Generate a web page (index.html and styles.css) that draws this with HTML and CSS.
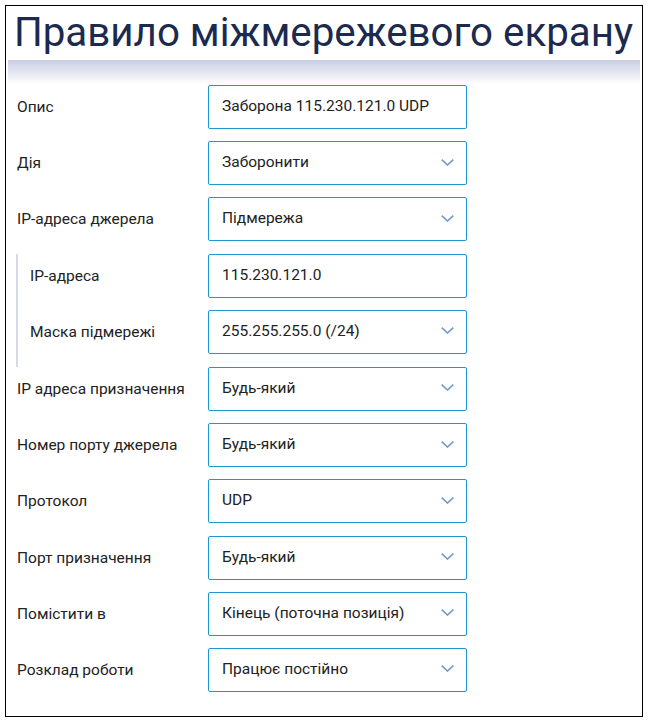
FILE: index.html
```html
<!DOCTYPE html>
<html lang="uk">
<head>
<meta charset="utf-8">
<link rel="stylesheet" href="styles.css">
</head>
<body>
<div class="panel">
  <h1 class="title">Правило міжмережевого екрану</h1>
  <div class="band"></div>
  <div class="form">
    <div class="row"><div class="label">Опис</div><div class="field">Заборона 115.230.121.0 UDP</div></div>
    <div class="row"><div class="label">Дія</div><div class="field select">Заборонити<svg class="chev" viewBox="0 0 13 7"><path d="M0.7 0.7 L6.5 6 L12.3 0.7"/></svg></div></div>
    <div class="row"><div class="label">IP-адреса джерела</div><div class="field select">Підмережа<svg class="chev" viewBox="0 0 13 7"><path d="M0.7 0.7 L6.5 6 L12.3 0.7"/></svg></div></div>
    <div class="group">
      <div class="row"><div class="label sub">IP-адреса</div><div class="field">115.230.121.0</div></div>
      <div class="row"><div class="label sub">Маска підмережі</div><div class="field select">255.255.255.0 (/24)<svg class="chev" viewBox="0 0 13 7"><path d="M0.7 0.7 L6.5 6 L12.3 0.7"/></svg></div></div>
    </div>
    <div class="row"><div class="label">IP адреса призначення</div><div class="field select">Будь-який<svg class="chev" viewBox="0 0 13 7"><path d="M0.7 0.7 L6.5 6 L12.3 0.7"/></svg></div></div>
    <div class="row"><div class="label">Номер порту джерела</div><div class="field select">Будь-який<svg class="chev" viewBox="0 0 13 7"><path d="M0.7 0.7 L6.5 6 L12.3 0.7"/></svg></div></div>
    <div class="row"><div class="label">Протокол</div><div class="field select">UDP<svg class="chev" viewBox="0 0 13 7"><path d="M0.7 0.7 L6.5 6 L12.3 0.7"/></svg></div></div>
    <div class="row"><div class="label">Порт призначення</div><div class="field select">Будь-який<svg class="chev" viewBox="0 0 13 7"><path d="M0.7 0.7 L6.5 6 L12.3 0.7"/></svg></div></div>
    <div class="row"><div class="label">Помістити в</div><div class="field select">Кінець (поточна позиція)<svg class="chev" viewBox="0 0 13 7"><path d="M0.7 0.7 L6.5 6 L12.3 0.7"/></svg></div></div>
    <div class="row"><div class="label">Розклад роботи</div><div class="field select">Працює постійно<svg class="chev" viewBox="0 0 13 7"><path d="M0.7 0.7 L6.5 6 L12.3 0.7"/></svg></div></div>
  </div>
</div>
</body>
</html>
```

FILE: styles.css
```css
html, body {
  margin: 0;
  padding: 0;
  background: #ffffff;
}
body {
  padding: 5px 0 0 5px;
  font-family: Roboto, "Noto Sans", sans-serif;
  color: #222222;
}
.panel {
  box-sizing: border-box;
  width: 638px;
  height: 712px;
  border: 1px solid #000000;
  padding: 0 2px;
}
.title {
  margin: 0;
  padding: 0 0 0 6px;
  font-size: 40.3px;
  font-weight: 400;
  line-height: 54px;
  color: #1b2a4e;
  white-space: nowrap;
}
.band {
  height: 24px;
  background: linear-gradient(#c8cde2, #ffffff);
}
.form {
  padding: 1px 0 0 9px;
  display: flex;
  flex-direction: column;
}
.row {
  display: flex;
  align-items: center;
  height: 44px;
  margin-bottom: 12.2px;
}
.label {
  width: 191px;
  font-size: 15.5px;
  color: #222222;
}
.label.sub {
  width: 178px;
}
.group {
  border-left: 2px solid #d6dae6;
  padding-left: 12px;
  margin-left: -1px;
  padding-bottom: 1px;
}
.field {
  box-sizing: border-box;
  width: 259px;
  height: 44px;
  border: 1px solid #1b97d4;
  border-radius: 2px;
  padding: 0 12px 2px 13px;
  display: flex;
  align-items: center;
  justify-content: space-between;
  font-size: 15.5px;
  color: #222222;
}
.chev {
  width: 13px;
  height: 7px;
  fill: none;
  stroke: #6d9bd1;
  stroke-width: 1.6;
}
```
